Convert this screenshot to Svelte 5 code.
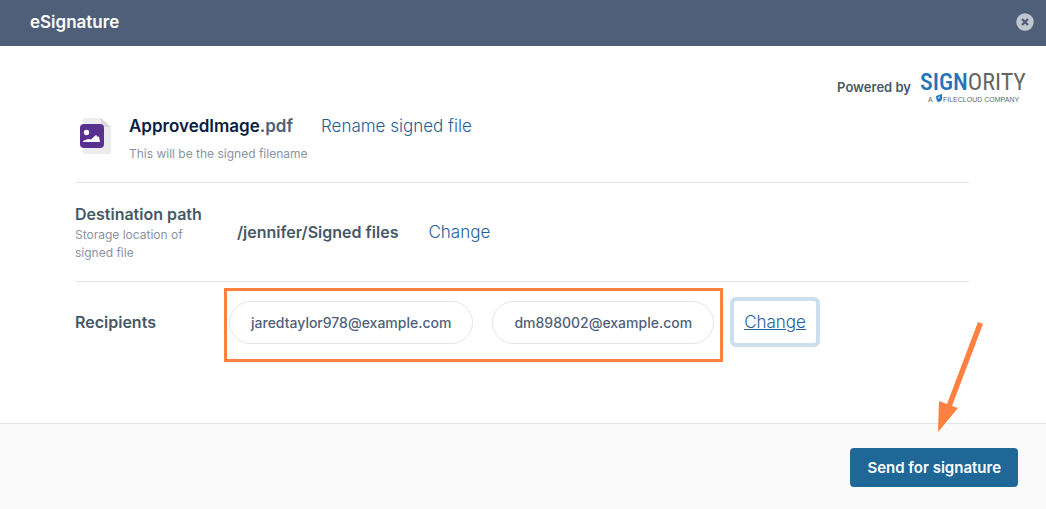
<script>
    let fileName = 'ApprovedImage';
    let extension = '.pdf';
    let path = '/jennifer/Signed files';
    let recipients = ['jaredtaylor978@example.com', 'dm898002@example.com'];
</script>

<style>
    :global(body) {
        margin: 0;
        background: #fff;
    }

    .dialog {
        position: relative;
        display: flex;
        flex-direction: column;
        min-height: 100vh;
        font-family: Inter, Roboto, sans-serif;
        color: #465866;
    }

    header {
        display: flex;
        align-items: center;
        justify-content: space-between;
        height: 46px;
        padding: 0 12px 0 30px;
        background: #505f79;
    }

    h1 {
        margin: 0;
        padding-bottom: 2px;
        font-size: 17px;
        line-height: 24px;
        font-weight: 600;
        color: #fff;
    }

    button {
        font-family: inherit;
        cursor: pointer;
    }

    .close {
        display: flex;
        padding: 0 0 3px;
        border: 0;
        background: none;
    }

    main {
        flex: 1;
    }

    .powered {
        display: flex;
        align-items: center;
        justify-content: flex-end;
        gap: 8px;
        height: 58px;
        padding: 12px 20px 0 0;
        box-sizing: border-box;
        font-size: 13px;
        font-weight: 600;
    }

    .powered span {
        padding-top: 12px;
    }

    .logo {
        display: block;
        margin-top: 8px;
    }

    .logo text {
        font-family: "Roboto Condensed", "Liberation Sans Narrow", "Liberation Sans", sans-serif;
        font-size: 24px;
        font-weight: 400;
        fill: #666;
    }

    .logo .sign {
        font-weight: 500;
        fill: #2474b9;
    }

    .logo .tagline {
        font-family: "Liberation Sans", sans-serif;
        font-size: 7px;
    }

    .rows {
        padding: 0 77px 0 75px;
    }

    .row {
        display: flex;
        align-items: center;
        border-bottom: 1px solid #e3e4e5;
    }

    .file {
        align-items: flex-start;
        height: 68px;
        padding-top: 10px;
    }

    .file svg {
        margin: 4px 17px 0 5px;
    }

    .name {
        display: flex;
        gap: 28px;
    }

    h2 {
        margin: 0;
        font-size: 17px;
        line-height: 24px;
        font-weight: 600;
        color: #091e42;
    }

    h2 span {
        color: #505f79;
    }

    h3 {
        margin: 0;
        font-size: 16px;
        line-height: 24px;
        font-weight: 600;
    }

    p {
        margin: 0;
        font-size: 12px;
        line-height: 18px;
        color: #8993a4;
    }

    .file p {
        padding-top: 7px;
    }

    a {
        font-size: 17px;
        line-height: 24px;
        font-weight: 300;
        color: #1f5f97;
        text-decoration: none;
    }

    .label {
        width: 149px;
        flex: none;
    }

    .label p {
        width: 125px;
    }

    .destination {
        height: 98px;
    }

    .path {
        padding: 0 30px 0 13px;
        font-size: 16px;
        line-height: 24px;
        font-weight: 600;
    }

    .recipients {
        height: 80px;
        padding-top: 6px;
        box-sizing: border-box;
        align-items: flex-start;
        border: 0;
    }

    .recipients h3 {
        padding-top: 22px;
    }

    ul {
        display: flex;
        gap: 19px;
        margin: 0;
        padding: 10px 6px 15px 2px;
        border: 3px solid #ff8040;
        list-style: none;
    }

    li {
        padding: 0 21px;
        border: 1px solid #e3e5e8;
        border-radius: 22px;
        font-size: 14px;
        line-height: 41px;
        font-weight: 500;
        color: #505f79;
    }

    .focused {
        margin: 9px 0 0 7px;
        padding: 9px 10px;
        border: 4px solid #ccdfee;
        border-radius: 6px;
        text-decoration: underline;
    }

    footer {
        display: flex;
        justify-content: flex-end;
        padding: 24px 28px 22px;
        border-top: 1px solid #e3e4e5;
        background: #fafafa;
    }

    .send {
        height: 39px;
        padding: 0 17px;
        border: 0;
        border-radius: 4px;
        background: #1f6797;
        color: #fff;
        font-size: 15px;
        font-weight: 600;
    }

    .arrow {
        position: absolute;
        right: 60px;
        bottom: 76px;
        pointer-events: none;
    }
</style>

<div class="dialog">
    <header>
        <h1>eSignature</h1>
        <button class="close" aria-label="Close">
            <svg width="18" height="18" viewBox="0 0 18 18">
                <circle cx="9" cy="9" r="8.7" fill="#c1c7d0" />
                <path d="M6 6l6 6M12 6l-6 6" stroke="#505f79" stroke-width="2.4" />
            </svg>
        </button>
    </header>

    <main>
        <div class="powered">
            <span>Powered by</span>
            <svg class="logo" width="107" height="38" viewBox="0 0 107 38" role="img" aria-label="Signority">
                <text x="1" y="24"><tspan class="sign">SIGN</tspan><tspan>ORITY</tspan></text>
                <text class="tagline" x="9" y="36">A</text>
                <path d="M17 30l6-2v5q-1 3-4 3-2-2-2-6z" fill="#2474b9" />
                <path d="M19 31l2-1v2l-2 1z" fill="#a9d2ed" />
                <text class="tagline" x="24" y="36">FILECLOUD COMPANY</text>
            </svg>
        </div>

        <div class="rows">
            <section class="row file">
                <svg width="32" height="36" viewBox="0 0 32 36">
                    <path d="M5 0h16l10 9v25q0 2-2 2H5q-2 0-2-2V2q0-2 2-2z" fill="#ececec" />
                    <path d="M21 0l10 9h-8q-2 0-2-2z" fill="#dadada" />
                    <rect y="6" width="24" height="24" rx="4" fill="#58308f" />
                    <circle cx="6.5" cy="14.5" r="2.7" fill="#fff" />
                    <path d="M3 24v-1l5-2 3 .5 5-4.5 2 2 1-.5 1 5.500z" fill="#fff" />
                </svg>
                <div>
                    <div class="name">
                        <h2>{fileName}<span>{extension}</span></h2>
                        <a href="#rename">Rename signed file</a>
                    </div>
                    <p>This will be the signed filename</p>
                </div>
            </section>

            <section class="row destination">
                <div class="label">
                    <h3>Destination path</h3>
                    <p>Storage location of signed file</p>
                </div>
                <span class="path">{path}</span>
                <a href="#destination">Change</a>
            </section>

            <section class="row recipients">
                <h3 class="label">Recipients</h3>
                <ul>
                    {#each recipients as email}
                        <li>{email}</li>
                    {/each}
                </ul>
                <a class="focused" href="#recipients">Change</a>
            </section>
        </div>
    </main>

    <footer>
        <button class="send">Send for signature</button>
    </footer>

    <!-- points at the send button -->
    <svg class="arrow" width="50" height="114" viewBox="0 0 50 114">
        <path d="M42 3L47 5 16 87l6 2L2 113 3 82l8 3z" fill="#ff8040" />
    </svg>
</div>
